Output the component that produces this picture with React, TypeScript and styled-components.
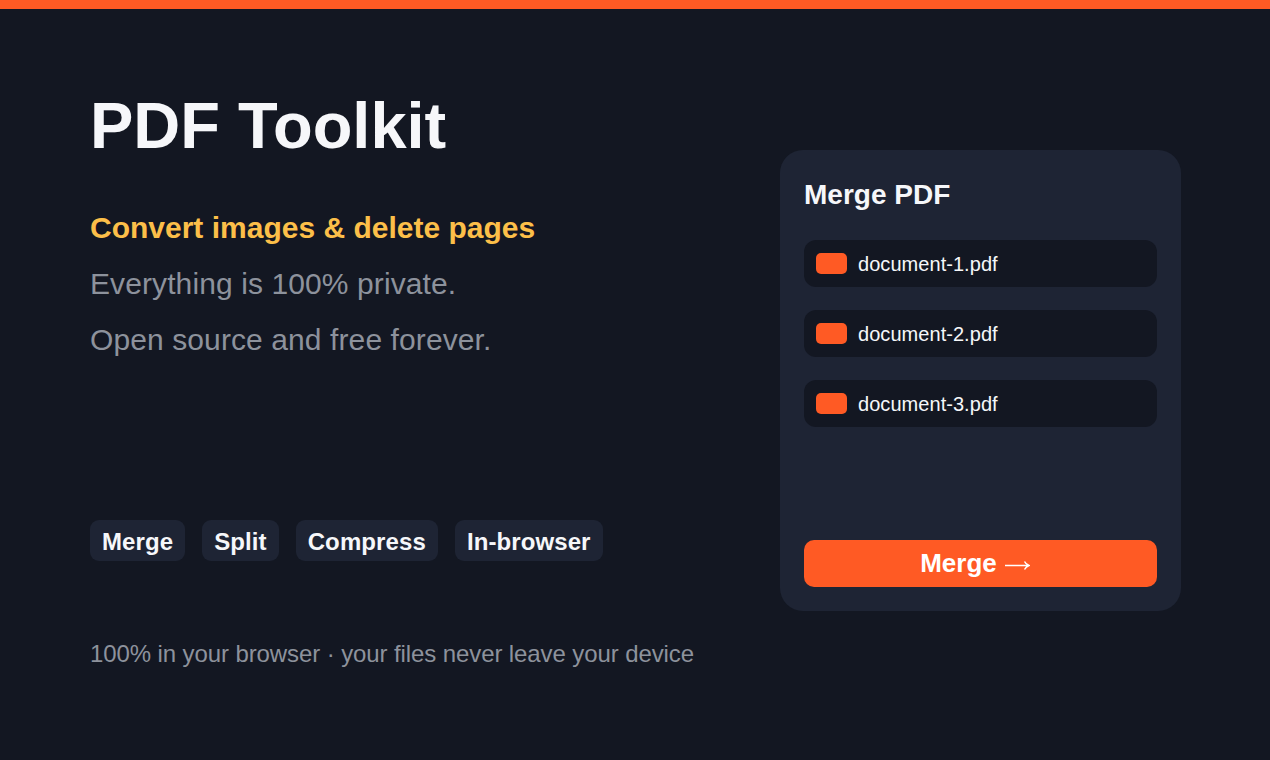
import styled, { createGlobalStyle } from 'styled-components'

const files = ['document-1.pdf', 'document-2.pdf', 'document-3.pdf']
const tags = ['Merge', 'Split', 'Compress', 'In-browser']

const App = () => (
  <>
    <GlobalStyle />
    <Page>
      <TopBar />
      <Content>
        <Intro>
          <Title>PDF Toolkit</Title>
          <Highlight>Convert images &amp; delete pages</Highlight>
          <Line>Everything is 100% private.</Line>
          <Line>Open source and free forever.</Line>
          <Tags>
            {tags.map((tag) => (
              <Tag key={tag}>{tag}</Tag>
            ))}
          </Tags>
          <Footnote>100% in your browser · your files never leave your device</Footnote>
        </Intro>
        <Card>
          <CardTitle>Merge PDF</CardTitle>
          <FileList>
            {files.map((file) => (
              <FileRow key={file}>
                <FileIcon />
                <FileName>{file}</FileName>
              </FileRow>
            ))}
          </FileList>
          <MergeButton type="button">
            Merge
            <ArrowIcon width="25" height="11" viewBox="0 0 25 11" fill="none" aria-hidden="true">
              <path d="M0 5.5H24M19.5 1.5C20.5 3.5 22 4.8 24 5.5C22 6.2 20.5 7.5 19.5 9.5" stroke="#fff" strokeWidth="1.5" />
            </ArrowIcon>
          </MergeButton>
        </Card>
      </Content>
    </Page>
  </>
)

export default App

const GlobalStyle = createGlobalStyle`
  html, body {
    margin: 0;
    padding: 0;
    background: #131722;
  }

  body {
    font-family: 'Liberation Sans', Arial, sans-serif;
  }
`

const Page = styled.div`
  display: flex;
  flex-direction: column;
  width: 1270px;
  height: 760px;
  overflow: hidden;
  background: #131722;
`

const TopBar = styled.div`
  flex: none;
  height: 9px;
  background: #ff5a24;
`

const Content = styled.div`
  display: flex;
  justify-content: space-between;
  align-items: flex-start;
  padding: 0 89px 0 90px;
`

const Intro = styled.div`
  display: flex;
  flex-direction: column;
  align-items: flex-start;
  padding-top: 80px;
`

const Title = styled.h1`
  margin: 0;
  font-size: 65px;
  line-height: 74px;
  font-weight: 700;
  color: #f6f7fa;
`

const Highlight = styled.div`
  margin-top: 48px;
  font-size: 30px;
  line-height: 34px;
  font-weight: 700;
  color: #fcbf49;
`

const Line = styled.div`
  margin-top: 22px;
  font-size: 30px;
  line-height: 34px;
  letter-spacing: 0.1px;
  color: #8d929c;
`

const Tags = styled.div`
  display: flex;
  gap: 17px;
  margin-top: 163px;
`

const Tag = styled.div`
  height: 41px;
  padding: 0 12px;
  border-radius: 9px;
  background: #1e2434;
  font-size: 24px;
  line-height: 43px;
  font-weight: 700;
  letter-spacing: 0.1px;
  color: #f6f7fa;
`

const Footnote = styled.div`
  margin-top: 79px;
  font-size: 24px;
  line-height: 28px;
  letter-spacing: -0.1px;
  color: #8d929c;
`

const Card = styled.div`
  display: flex;
  flex-direction: column;
  box-sizing: border-box;
  width: 401px;
  height: 461px;
  margin-top: 141px;
  padding: 29px 24px 24px;
  border-radius: 23px;
  background: #1e2434;
`

const CardTitle = styled.h2`
  margin: 0;
  font-size: 28px;
  line-height: 32px;
  font-weight: 700;
  color: #f6f7fa;
`

const FileList = styled.div`
  display: flex;
  flex-direction: column;
  gap: 23px;
  margin-top: 29px;
`

const FileRow = styled.div`
  display: flex;
  align-items: center;
  gap: 11px;
  height: 47px;
  padding: 0 12px;
  border-radius: 12px;
  background: #131722;
`

const FileIcon = styled.span`
  flex: none;
  width: 31px;
  height: 21px;
  border-radius: 5px;
  background: #ff5a24;
`

const FileName = styled.span`
  padding-top: 2px;
  font-size: 20px;
  letter-spacing: 0.05px;
  color: #f6f7fa;
`

const MergeButton = styled.button`
  display: flex;
  align-items: center;
  justify-content: center;
  height: 47px;
  margin-top: auto;
  padding: 0 11px 0 0;
  border: 0;
  border-radius: 10px;
  background: #ff5a24;
  font-family: inherit;
  font-size: 26px;
  font-weight: 700;
  color: #fff;
`

const ArrowIcon = styled.svg`
  flex: none;
  margin: 3px 0 0 8px;
`
